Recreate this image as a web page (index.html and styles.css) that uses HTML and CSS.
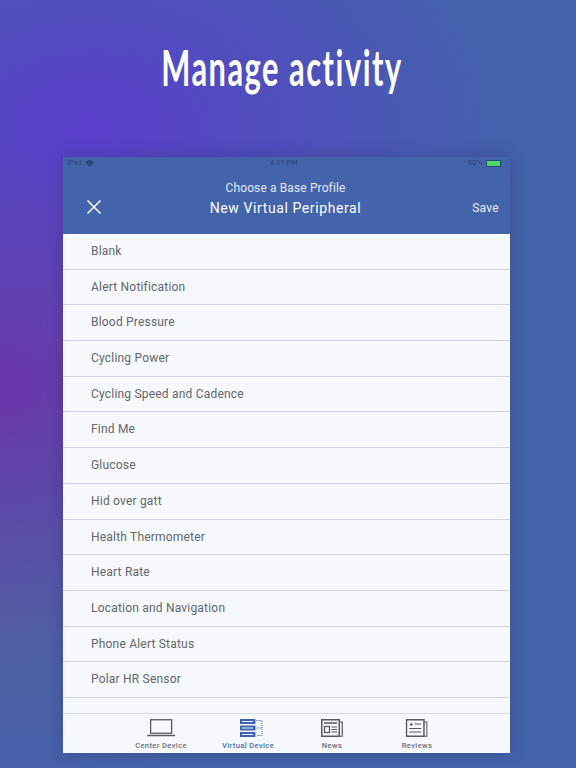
FILE: index.html
```html
<!DOCTYPE html>
<html lang="en">
<head>
    <meta charset="UTF-8">
    <meta name="viewport" content="width=device-width, initial-scale=1.0">
    <title>Manage activity</title>
    <link rel="stylesheet" href="styles.css">
</head>
<body>
    <h1 class="headline">Manage activity</h1>
    <div class="tablet">
        <div class="status-bar">
            <div class="status-left">
                <span>iPad</span>
                <svg class="wifi" width="9" height="7" viewBox="0 0 9 7"><path d="M4.5 7 0 2.2C2.6-.7 6.4-.7 9 2.2z" fill="#2f4679"/></svg>
            </div>
            <span class="status-time">4:21 PM</span>
            <div class="status-right">
                <span>80%</span>
                <span class="battery"></span>
            </div>
        </div>
        <div class="nav-bar">
            <svg class="close-icon" width="16" height="16" viewBox="0 0 16 16"><path d="M1.5 1.5l13 13M14.5 1.5l-13 13" stroke="#fff" stroke-width="1.5" fill="none"/></svg>
            <div class="nav-title">
                <div class="nav-sub">Choose a Base Profile</div>
                <div class="nav-main">New Virtual Peripheral</div>
            </div>
            <span class="nav-save">Save</span>
        </div>
        <ul class="profile-list">
            <li>Blank</li>
            <li>Alert Notification</li>
            <li>Blood Pressure</li>
            <li>Cycling Power</li>
            <li>Cycling Speed and Cadence</li>
            <li>Find Me</li>
            <li>Glucose</li>
            <li>Hid over gatt</li>
            <li>Health Thermometer</li>
            <li>Heart Rate</li>
            <li>Location and Navigation</li>
            <li>Phone Alert Status</li>
            <li>Polar HR Sensor</li>
            <li></li>
        </ul>
        <div class="tab-bar">
            <div class="tab tab-center">
                <svg width="28" height="18" viewBox="0 0 28 18" fill="none" stroke="#555a60"><rect x="3.5" y="0.75" width="21" height="13.5" stroke-width="1.3"/><path d="M0 16.5h28" stroke-width="1.5"/></svg>
                <span>Center Device</span>
            </div>
            <div class="tab tab-virtual active">
                <svg class="virtual-icon" width="23" height="18" viewBox="0 0 23 18" fill="none"><rect x="0" y="0" width="15.5" height="5" fill="#3f62b4"/><rect x="0" y="6.5" width="15.5" height="5" fill="#3f62b4"/><rect x="0" y="13" width="15.5" height="5" fill="#3f62b4"/><path d="M2 2.5h11M2 9h11M2 15.5h11" stroke="#f5f6fa" stroke-width="1"/><path d="M16.5 1.5h5.5v15h-5.5M16.5 9h5.5" stroke="#3f62b4" stroke-width="1" stroke-dasharray="1 1"/></svg>
                <span>Virtual Device</span>
            </div>
            <div class="tab tab-news">
                <svg width="22" height="18" viewBox="0 0 22 18" fill="none" stroke="#555a60"><path d="M.75.75h17.5v16.5H.75z" stroke-width="1.5"/><path d="M18.25 3h3v14.25h-3" stroke-width="1.2"/><path d="M3 4h13" stroke-width="1.5"/><rect x="3.5" y="7.5" width="5" height="6" stroke-width="1.3"/><path d="M10.5 8h5.5M10.5 10.5h5.5M10.5 13h5.5" stroke-width="1.2"/></svg>
                <span>News</span>
            </div>
            <div class="tab tab-reviews">
                <svg width="22" height="18" viewBox="0 0 22 18" fill="none" stroke="#555a60"><path d="M.75.75h17.5v16.5H.75z" stroke-width="1.5"/><path d="M18.25 3h3v14.25h-3" stroke-width="1.2"/><circle cx="5.5" cy="5.5" r="1.3" fill="#555a60" stroke="none"/><path d="M9 5h6.5M3.5 9.5h12M3.5 13h12" stroke-width="1.2"/></svg>
                <span>Reviews</span>
            </div>
        </div>
    </div>
</body>
</html>
```
FILE: styles.css
```css
html, body {
    height: 100%;
}

body {
    margin: 0;
    height: 768px;
    overflow: hidden;
    box-sizing: border-box;
    padding-top: 38px;
    font-family: 'Roboto', 'Liberation Sans', sans-serif;
    background:
        radial-gradient(ellipse 300px 250px at 0 390px, rgba(112, 48, 170, 0.9), rgba(112, 48, 170, 0)),
        radial-gradient(ellipse 260px 200px at 0 610px, rgba(105, 85, 150, 0.4), rgba(105, 85, 150, 0)),
        radial-gradient(ellipse 430px 300px at 90px 130px, rgba(92, 60, 205, 0.95), rgba(92, 60, 205, 0)),
        #4363ab;
}

.headline {
    margin: 0;
    width: 576px;
    height: 119px;
    text-align: center;
    font-family: 'Lato', 'Liberation Sans', sans-serif;
    font-size: 50px;
    line-height: 58px;
    font-weight: 700;
    letter-spacing: 2.5px;
    color: #fff;
    transform: translateX(-6px) scaleX(0.615);
}

.tablet {
    width: 447px;
    height: 596px;
    margin-left: 63px;
    background: #f7f8fb;
    box-shadow: 0 0 14px rgba(40, 40, 90, 0.35);
    display: flex;
    flex-direction: column;
    overflow: hidden;
}

.status-bar {
    height: 12px;
    padding: 0 9px 0 4px;
    background: #4363ab;
    color: #2f4679;
    font-size: 7.5px;
    line-height: 12px;
    display: grid;
    grid-template-columns: 1fr auto 1fr;
    align-items: center;
}

.status-left {
    display: flex;
    align-items: center;
    gap: 3px;
}

.status-right {
    display: flex;
    align-items: center;
    justify-content: flex-end;
    gap: 4px;
}

.battery {
    width: 13px;
    height: 5px;
    background: #4cd964;
    border: 0.5px solid #2f4679;
    display: block;
    position: relative;
}

.battery::after {
    content: "";
    position: absolute;
    right: -2px;
    top: 1.5px;
    width: 1px;
    height: 2px;
    background: #2f4679;
}

.nav-bar {
    height: 65px;
    background: #4363ab;
    color: #fff;
    position: relative;
    display: flex;
    align-items: flex-start;
    justify-content: center;
}

.close-icon {
    position: absolute;
    left: 23px;
    top: 30px;
}

.nav-title {
    text-align: center;
    padding: 12px 2px 0 0;
}

.nav-sub {
    font-size: 12px;
    line-height: 15px;
    letter-spacing: 0.12px;
    color: #e3e8f4;
}

.nav-main {
    font-size: 14px;
    line-height: 18px;
    margin-top: 3px;
    letter-spacing: 0.6px;
}

.nav-save {
    position: absolute;
    right: 11px;
    top: 31px;
    font-size: 12px;
    line-height: 16px;
    letter-spacing: 0.3px;
    color: #e8ecf6;
}

.profile-list {
    list-style: none;
    margin: 0;
    padding: 0;
    flex: 1;
    overflow: hidden;
}

.profile-list li {
    height: 35.7px;
    box-sizing: border-box;
    padding-left: 28px;
    line-height: 34px;
    font-size: 12px;
    letter-spacing: 0.2px;
    color: #63676c;
    border-bottom: 1px solid #ced5e0;
}

.tab-bar {
    height: 40px;
    background: #f7f8fb;
    border-top: 1px solid #d8dbe3;
    box-sizing: border-box;
    position: relative;
}

.tab {
    position: absolute;
    top: 5px;
    display: flex;
    flex-direction: column;
    align-items: center;
    transform: translateX(-50%);
    font-size: 7.5px;
    line-height: 10px;
    font-weight: 500;
    letter-spacing: 0.4px;
    color: #6c7075;
    white-space: nowrap;
    gap: 4px;
}

.tab.active {
    color: #4c6cb8;
}

.virtual-icon {
    transform: translateX(3px);
}

.tab-center {
    left: 98px;
}

.tab-virtual {
    left: 185px;
}

.tab-news {
    left: 269px;
}

.tab-reviews {
    left: 354px;
}
```
